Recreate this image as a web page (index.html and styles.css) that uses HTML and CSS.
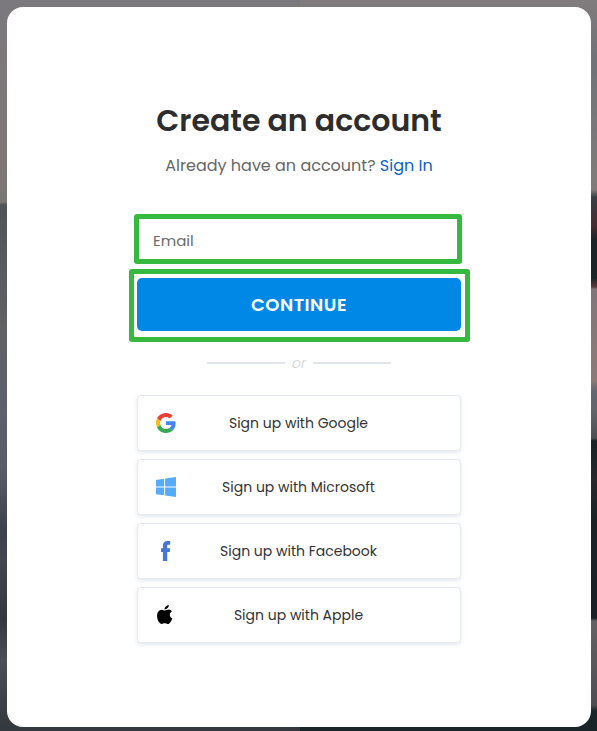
FILE: index.html
```html
<!DOCTYPE html>
<html lang="en">
  <head>
    <meta charset="utf-8">
    <title>Create an account</title>
    <link rel="stylesheet" href="styles.css">
  </head>
  <body>
    <main class="card">
      <h1>Create an account</h1>
      <p class="signin">Already have an account? <a href="#">Sign In</a></p>

      <!-- Email form -->
      <form class="signup">
        <div class="highlight email-box">
          <input type="email" name="email" placeholder="Email" aria-label="Email">
        </div>
        <div class="highlight continue-box">
          <button type="submit" class="continue">CONTINUE</button>
        </div>
      </form>

      <div class="divider"><span>or</span></div>

      <!-- Social sign up -->
      <div class="social">
        <button type="button" class="social-btn">
          <svg class="icon" viewBox="0 0 48 48">
            <path fill="#EA4335" d="M24 9.5c3.54 0 6.71 1.22 9.21 3.6l6.85-6.85C35.9 2.38 30.47 0 24 0 14.62 0 6.51 5.38 2.56 13.22l7.98 6.19C12.43 13.72 17.74 9.5 24 9.5z"/>
            <path fill="#4285F4" d="M46.98 24.55c0-1.57-.15-3.09-.38-4.55H24v9.02h12.94c-.58 2.96-2.26 5.48-4.78 7.18l7.73 6c4.51-4.18 7.09-10.36 7.09-17.65z"/>
            <path fill="#FBBC05" d="M10.53 28.59c-.48-1.45-.76-2.99-.76-4.59s.27-3.14.76-4.59l-7.98-6.19C.92 16.46 0 20.12 0 24c0 3.88.92 7.54 2.56 10.78l7.97-6.19z"/>
            <path fill="#34A853" d="M24 48c6.48 0 11.93-2.13 15.89-5.81l-7.73-6c-2.15 1.45-4.92 2.3-8.16 2.3-6.26 0-11.57-4.22-13.47-9.91l-7.98 6.19C6.51 42.62 14.62 48 24 48z"/>
          </svg>
          <span>Sign up with Google</span>
        </button>
        <button type="button" class="social-btn">
          <svg class="icon" viewBox="0 0 20 20">
            <path fill="#55ACFF" d="M0 2.9L8.1 1.700V9.500H0zM9.100 1.500L20 0V9.500H9.100zM0 10.500H8.100V18.300L0 17.200zM9.100 10.500H20V20L9.100 18.500z"/>
          </svg>
          <span>Sign up with Microsoft</span>
        </button>
        <button type="button" class="social-btn">
          <svg class="icon" viewBox="0 0 20 20">
            <path fill="#4676D7" d="M6.900 20V11H5V7.300H6.900V5C6.900 1.600 8.400 0 11.600 0H14.200V3.700H12.500C11.400 3.700 11.200 4.200 11.200 5.100V7.300H14.200L13.800 11H11.200V20z"/>
          </svg>
          <span>Sign up with Facebook</span>
        </button>
        <button type="button" class="social-btn">
          <svg class="icon" viewBox="0 0 20 20">
            <path fill="#000" d="M12.800 0c.1 2.300-1.900 4.400-4.200 4.400C8.400 2.200 10.500.2 12.800 0zM15.800 6.400c-1.300.8-2 1.900-2 3.300 0 1.700 1 3 2.500 3.600-.4 1.300-1 2.500-1.800 3.600-.8 1.200-1.600 2.100-2.800 2.100-1.200 0-1.600-.7-3-.7s-1.900.7-3 .7c-1.200 0-2.100-1.100-2.900-2.200C.9 13.700.4 9.300 2.200 6.700c.9-1.300 2.200-2 3.600-2 1.300 0 2.300.8 3.300.8.9 0 2-.9 3.700-.9 1.300 0 2.400.7 3 1.800z"/>
          </svg>
          <span>Sign up with Apple</span>
        </button>
      </div>
    </main>
  </body>
</html>
```

FILE: styles.css
```css
* {
  box-sizing: border-box;
}
body {
  margin: 0;
  padding: 7px 6px 4px 7px;
  height: 731px;
  overflow: hidden;
  font-family: Poppins, Inter, "Open Sans", sans-serif;
  /* dimmed landscape that shows round the card */
  background:
    linear-gradient(#7b797d 0, #7e7777 120px, #7c7673 202px, #505459 205px, #606265 330px, #5d606d 410px, #5a5d69 470px, #3b414e 530px, #42464f 560px, #33373f 620px, #4b4f56 660px, #33383f 731px) left / 300px 100% no-repeat,
    linear-gradient(#817c7d 0, #707277 60px, #817c7b 190px, #394044 197px, #462d32 225px, #1b2327 240px, #1b2327 278px, #593c40 287px, #81777b 289px, #8b7b77 380px, #636570 392px, #64656b 410px, #4e4f53 438px, #192225 441px, #29282d 480px, #1a2226 520px, #192126 618px, #646165 621px, #514e53 705px, #1a2529 711px) right / 300px 100% no-repeat;
}
.card {
  height: 720px;
  padding: 92px 130px 0;
  border-radius: 16px;
  background: #fff;
}
h1 {
  margin: 0;
  font-size: 30px;
  font-weight: 600;
  line-height: 44px;
  text-align: center;
  white-space: nowrap;
  color: #2d2d2d;
}
.signin {
  margin: 11px 0 0;
  font-size: 16px;
  line-height: 24px;
  text-align: center;
  white-space: nowrap;
  color: #666;
}
.signin a {
  color: #0b5fcc;
  text-decoration: none;
}
.signup {
  margin: 36px -9px 0 -8px;
}
.highlight {
  border: 5px solid #35b93e;
  border-radius: 3px;
}
.email-box {
  height: 50px;
  margin: 0 8px 0 5px;
}
.email-box input {
  display: block;
  width: 100%;
  height: 100%;
  padding: 3px 14px 0;
  border: none;
  outline: none;
  background: none;
  font: 15px Poppins, Inter, sans-serif;
  color: #666;
}
.email-box input::placeholder {
  color: #6b6b6b;
}
.continue-box {
  height: 73px;
  margin-top: 5px;
  padding: 4px 4px 6px 3px;
}
.continue {
  display: block;
  width: 100%;
  height: 53px;
  padding: 0;
  border: none;
  border-radius: 5px;
  background: #0088e6;
  color: #fff;
  font: 600 18px Poppins, Inter, sans-serif;
  letter-spacing: 0.5px;
  cursor: pointer;
}
.divider {
  display: flex;
  align-items: center;
  gap: 7px;
  width: 184px;
  height: 24px;
  margin: 9px 0 0 70px;
  font-size: 14px;
  font-style: italic;
  font-weight: 300;
  color: #ced2d6;
}
.divider::before,
.divider::after {
  content: "";
  flex: 1;
  height: 2px;
  background: #e2e6ea;
}
.social {
  display: flex;
  flex-direction: column;
  gap: 8px;
  margin-top: 20px;
}
.social-btn {
  display: flex;
  align-items: center;
  height: 56px;
  padding: 0 39px 0 18px;
  border: 1px solid #e4e8ec;
  border-radius: 4px;
  background: #fff;
  box-shadow: 0 2px 4px rgba(40, 65, 90, 0.12);
  font: 14px Poppins, Inter, sans-serif;
  color: #333;
  cursor: pointer;
}
.social-btn span {
  flex: 1;
  text-align: center;
}
.icon {
  width: 20px;
  height: 20px;
}
```
